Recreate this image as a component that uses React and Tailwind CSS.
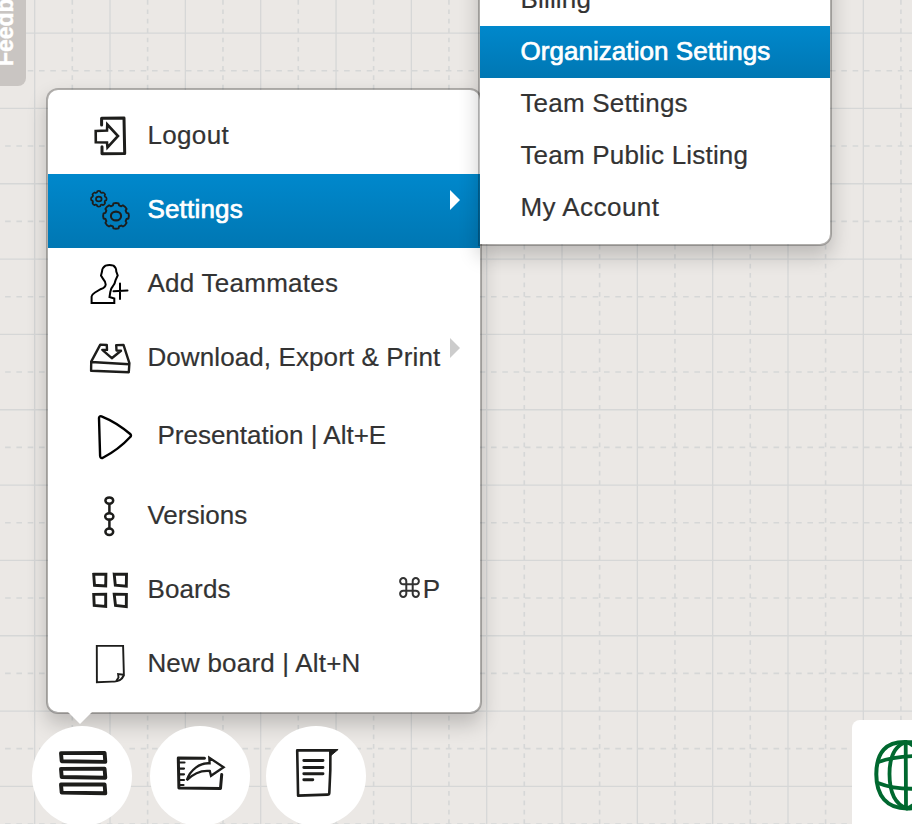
import React from "react";

const CELL = 75.33;
const steps = Array.from({ length: 13 }, (_, i) => i);

function Grid() {
  return (
    <svg className="absolute inset-0" width="912" height="824" fill="none" stroke="#d6d7d7">
      {steps.map((i) => (
        <g key={i}>
          <line x1={34.7 + i * CELL} x2={34.7 + i * CELL} y1="0" y2="824" strokeWidth="1.3" />
          <line x1="0" x2="912" y1={33.1 + i * CELL} y2={33.1 + i * CELL} strokeWidth="1.3" />
          <line x1={72.3 + i * CELL} x2={72.3 + i * CELL} y1="0" y2="824" strokeWidth="1.6" strokeDasharray="4.7 4.717" />
          <line x1="-6.2" x2="912" y1={70.7 + (i - 1) * CELL} y2={70.7 + (i - 1) * CELL} strokeWidth="1.6" strokeDasharray="5.6 5.7" />
        </g>
      ))}
    </svg>
  );
}

function Icon({ box, className, children, color = "#1d1d1b", width = 2.2 }) {
  const [, , w, h] = box.split(" ");
  return (
    <svg className={className} viewBox={box} width={w} height={h} fill="none" stroke={color} strokeWidth={width} strokeLinejoin="round" strokeLinecap="round">
      {children}
    </svg>
  );
}

// Rounded cog outline: wide teeth at radius r, narrow notches at radius r - depth.
function gear(cx, cy, r, teeth, depth) {
  const p = (radius, a) => `${(cx + radius * Math.cos(a)).toFixed(2)} ${(cy + radius * Math.sin(a)).toFixed(2)}`;
  const span = (Math.PI * 2) / teeth;
  let d = "";
  for (let i = 0; i < teeth; i++) {
    const a = i * span;
    d += `${i === 0 ? "M" : "L"}${p(r, a - span * 0.26)}Q${p(r + 0.6, a)} ${p(r, a + span * 0.26)}`;
    d += `L${p(r - depth, a + span * 0.36)}L${p(r - depth, a + span * 0.64)}`;
  }
  return `${d}Z`;
}

const LogoutIcon = () => (
  <Icon box="88 100 44 74" width={3}>
    <path d="M101.6 125V118.2L124 118l.7 35.5L102 153.8v-7" />
    <path d="M95.7 131l11.3-.5.3-6L118 136l-10.5 11.5-.5-5-11.2-.2z" strokeWidth="2.6" strokeLinejoin="miter" />
  </Icon>
);

const SettingsIcon = () => (
  <Icon box="88 174 44 74" width={1.7}>
    <path d={gear(98.8, 198.8, 7.6, 8, 1)} />
    <ellipse cx="98.8" cy="199" rx="2.8" ry="2.4" />
    <path d={gear(116, 215.9, 12.7, 8, 1.7)} strokeWidth="1.9" />
    <ellipse cx="116" cy="216" rx="5.1" ry="4.4" strokeWidth="2.1" />
  </Icon>
);

const TeammateIcon = () => (
  <Icon box="88 248 44 74" color="#000" width={2}>
    <path
      d="M105.500 265.600Q109.500 264.400 113.500 265.600Q116.200 267.500 116.300 271.500L117.700 275.500L115.600 280Q115 283.500 113 286Q111 288 110.300 292L109.500 297L114.300 298.500V303H91.600V296.500Q91.800 294.500 95 292.500L101 289Q105.500 287.500 105.700 284.500Q105.500 281.500 103.500 279.500L101 275.500L102 271.500Q102.300 267.500 105.500 265.600z"
      strokeLinejoin="miter"
    />
    <path d="M120 283.500V299M113.500 291.300L127.500 290.500" />
  </Icon>
);

const DownloadIcon = () => (
  <Icon box="88 322 44 74" width={2.4}>
    <path d="M106.800 345l-6.500-.4L91.200 361.600l-.1 9.200 37.700 1.400.6-9-5.900-18.300-7.300.2.3 5.400 4.500.3-9.200 7.400-9.500-8.300h4.700zM91.200 362l38 2.200" />
  </Icon>
);

const PlayIcon = () => (
  <Icon box="88 396 48 82" color="#000" width={2.4}>
    <path d="M101.500 416.300C112 420.500 122 427 130.200 434q1.600 1.500 0 3C122 446 112 453 102.500 458q-2.300.5-2.400-2.200L99 418q.3-2.300 2.500-1.700z" />
  </Icon>
);

const VersionsIcon = () => (
  <Icon box="88 478 44 74" width={2.500}>
    <path d="M109.400 504.300v8.500M109.400 520v8.300" />
    <ellipse cx="109.300" cy="500.600" rx="3.900" ry="3.200" />
    <ellipse cx="109.300" cy="516.400" rx="4.100" ry="3.200" />
    <ellipse cx="109.300" cy="531.700" rx="3.900" ry="3.200" />
  </Icon>
);

const BoardsIcon = () => (
  <Icon box="88 552 44 74" width={2.900}>
    <g strokeLinejoin="miter">
      <path d="M93.700 574.300l12.200-.2-.2 11.900-11.200-.7z" />
      <path d="M114.200 574.100l12.300.2-.2 11.900-11-1z" />
      <path d="M93.700 594.400l12-.2v12.200l-11.500-1z" />
      <path d="M114.200 594.200l12.200.2-.1 12.300-10.800-1.200z" />
    </g>
  </Icon>
);

const PageIcon = () => (
  <Icon box="88 626 44 74" width={1.900}>
    <path d="M96.800 645.900H123.100L123.900 675.500C122 680 118 682 112 681.600L96.900 682.200zM123.700 674.800l-5.600-.8.400 3.500-2.500 3.800q5.500-.4 7.700-6.500" strokeLinejoin="miter" />
  </Icon>
);

const MENU = [
  { label: "Logout", icon: LogoutIcon, text: "tracking-[0.35px]" },
  { label: "Settings", icon: SettingsIcon, text: "tracking-[0.2px]", active: true, arrow: true },
  { label: "Add Teammates", icon: TeammateIcon, text: "tracking-[0.27px]" },
  { label: "Download, Export & Print", icon: DownloadIcon, text: "tracking-[0.1px]", arrow: true },
  { label: "Presentation | Alt+E", icon: PlayIcon, text: "tracking-[0.01px] ml-1.5", tall: true },
  { label: "Versions", icon: VersionsIcon, text: "tracking-[0.01px]", low: true },
  { label: "Boards", icon: BoardsIcon, text: "tracking-[0.15px]", low: true, shortcut: "P" },
  { label: "New board | Alt+N", icon: PageIcon, text: "tracking-[0.2px]", low: true },
];

function MenuRow({ label, icon: Glyph, text, active, arrow, tall, low, shortcut }) {
  const lift = low ? "" : "pb-1";
  return (
    <li
      className={`relative flex items-center pl-10 ${tall ? "h-[82px]" : "h-[74px]"} ${
        active
          ? "bg-linear-to-b from-[#0088cc] to-[#0077b3] text-white [-webkit-text-stroke:0.7px_white]"
          : "[-webkit-text-stroke:0.2px_#333]"
      }`}
    >
      <Glyph />
      <span className={`whitespace-pre pl-[15.4px] ${lift} ${text}`}>{label}</span>
      {shortcut && (
        <span className="ml-auto flex items-center gap-[3px] pr-10">
          <svg className="mb-[3px]" width="21" height="21" viewBox="0 0 21 21" fill="none" stroke="#333" strokeWidth="2">
            <path d="M7.300 7.300h6.400v6.400h-6.400zM7.300 7.300H4.300a3.100 3.100 0 1 1 3-3zM13.700 7.300V4.300a3.100 3.100 0 1 1 3 3zM13.700 13.700h3a3.100 3.100 0 1 1-3 3zM7.300 13.700v3a3.100 3.100 0 1 1-3-3z" />
          </svg>
          {shortcut}
        </span>
      )}
      {arrow && (
        <span
          className={`absolute top-4 right-5 border-y-10 border-l-10 border-y-transparent ${active ? "border-l-white" : "border-l-[#cccccc]"}`}
        />
      )}
    </li>
  );
}

const SUBMENU = [
  { label: "Billing", text: "tracking-[0.2px]" },
  { label: "Organization Settings", text: "tracking-[0.06px]", active: true },
  { label: "Team Settings", text: "tracking-[0.2px]" },
  { label: "Team Public Listing", text: "tracking-[0.2px]" },
  { label: "My Account", text: "tracking-[0.47px]" },
];

const panel = "border-2 border-black/25 bg-white bg-clip-padding shadow-[0_10px_20px_rgba(0,0,0,0.2)]";

export default function App() {
  return (
    <div className="relative h-[824px] w-[912px] overflow-hidden bg-[#ebe8e5] font-['Liberation_Sans',Arial,sans-serif] text-[26px] leading-10 text-[#333333]">
      <Grid />

      <div className="absolute top-[-60px] left-0 h-[146px] w-[26px] rounded-br-lg bg-[#c9c5c2]">
        <span className="absolute right-[9px] bottom-5 rotate-180 text-[23px] leading-6 font-bold text-white [-webkit-text-stroke:0.4px_white] [writing-mode:vertical-rl]">
          Feedback
        </span>
      </div>

      <nav className="absolute bottom-[-2px] left-8 z-10 flex">
        <button className="size-[100px] rounded-full bg-white">
          <Icon box="32 726 100 100" width={3.900}>
            <path d="M61 753.100l43.600-.1.700 8.900-43.600-.700z" />
            <path d="M61 768.900l43.600-.1.700 8.900-43.600-.700z" />
            <path d="M61 784.500l43.600-.1.700 8.900-43.600-.700z" />
          </Icon>
        </button>
        <button className="ml-[18px] size-[100px] rounded-full bg-white">
          <Icon box="150 726 100 100" width={3}>
            <path d="M204.500 758.300l-26.200-.4.600 30 41.600.5 1.200-13.800" />
            <path d="M179 762.500h5.500M179 768.600h5M179 774.300h5M179 780h5M179 785h4.500" strokeWidth="2.200" />
            <path d="M186.800 780.200C190 770 200 762.500 209.600 763.300L209.300 757.700 223.600 767.300 211 775.800 209.800 771C200 770 193.500 773.500 186.800 780.200z" strokeWidth="2.300" strokeLinejoin="miter" />
          </Icon>
        </button>
        <button className="ml-4 size-[100px] rounded-full bg-white">
          <Icon box="266 726 100 100" width={2.600}>
            <path d="M297.200 750.400l33.200-.1-.1 20-1 22.700q0 1.600-2 1.600l-29.200 1z" />
            <path d="M329.500 749.500h8.600l-7.500 6.300z" fill="#1d1d1b" strokeWidth="1" strokeLinejoin="miter" />
            <path d="M303.800 760.500h19.200M303.800 767.500h19.200M303.800 773.700h19.200M303.800 779.800h9" strokeWidth="2.900" />
          </Icon>
        </button>
      </nav>

      <div className="absolute right-0 bottom-0 h-[104px] w-[60px] overflow-hidden rounded-tl-lg bg-white">
        <Icon box="852 720 60 104" color="#00682f" width={4}>
          <path d="M906 742C886 741.500 876.500 752 876.300 774S887 808.500 907 808.500 938 798 938 774 926 742 906 742z" />
          <path d="M906 742C894 746 889.500 758 889.500 774S894 804 907 808.500M906 742C918 746 924 758 924 774S919 804 907 808.500M905.700 742l.3 66" strokeWidth="3.800" />
          <path d="M878.500 762C889 758 900 756.500 914 756M878 783C888 787 900 789 914 788.700" strokeWidth="3.800" />
        </Icon>
      </div>

      <div className={`absolute top-[88px] left-[46px] w-[436px] rounded-xl pt-2.5 pb-3 ${panel}`}>
        <ul>
          {MENU.map((item) => (
            <MenuRow key={item.label} {...item} />
          ))}
        </ul>
        <span className="absolute top-full left-5 border-x-12 border-t-12 border-x-transparent border-t-white" />
      </div>

      <div className={`absolute top-[-38px] left-[478px] w-[354px] rounded-br-xl pt-2.5 pb-2.5 ${panel}`}>
        <ul>
          {SUBMENU.map(({ label, text, active }) => (
            <li
              key={label}
              className={`h-[52px] pt-[5px] pl-[40.4px] ${text} ${
                active
                  ? "bg-linear-to-b from-[#0088cc] to-[#0077b3] text-white [-webkit-text-stroke:0.7px_white]"
                  : "[-webkit-text-stroke:0.2px_#333]"
              }`}
            >
              {label}
            </li>
          ))}
        </ul>
      </div>
    </div>
  );
}
